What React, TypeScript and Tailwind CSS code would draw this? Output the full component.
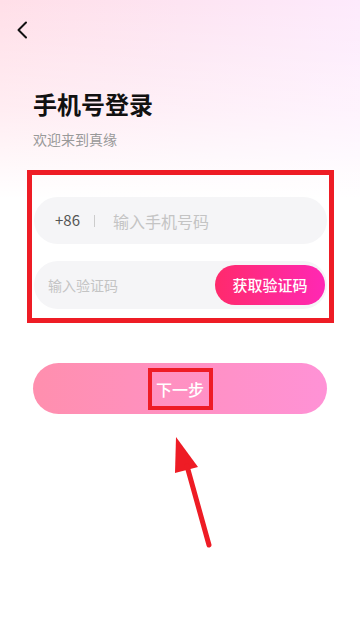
import React from "react";

export default function App() {
  return (
    <div
      className="relative w-[360px] h-[620px] overflow-hidden bg-[linear-gradient(to_bottom,rgba(255,255,255,0)_0%,rgba(255,255,255,0.45)_18%,#ffffff_32%),linear-gradient(to_right,#ffdfe8_0%,#fde4f2_50%,#fdeafc_100%)]"
      style={{ fontFamily: '"Noto Sans CJK SC", "Noto Sans", sans-serif' }}
    >
      <div className="pt-[21px] pl-[16px]">
        <svg width="12" height="18" viewBox="0 0 12 18" fill="none">
          <path d="M10 1.5 L2.5 9 L10 16.5" stroke="#111" strokeWidth="2" strokeLinecap="round" strokeLinejoin="round" />
        </svg>
      </div>

      <div className="ml-[33px] mt-[49px] text-[24px] leading-[32px] font-bold text-[#111]">手机号登录</div>
      <div className="ml-[33px] mt-[9px] text-[14px] leading-[20px] text-[#999]">欢迎来到真缘</div>

      <div className="ml-[27px] mt-[21px] w-[307px] border-[5px] border-[#ee1c25] pt-[22px] pb-[9px] px-[2px] flex flex-col gap-[17px]">
        <div className="h-[47px] rounded-full bg-[#f5f5f7] flex items-center pl-[21px]">
          <span className="text-[15px] text-[#555]">+86</span>
          <span className="ml-[14px] w-px h-[12px] bg-[#ccc]"></span>
          <span className="ml-[18px] text-[16px] text-[#c4c4c4]">输入手机号码</span>
        </div>
        <div className="h-[48px] rounded-full bg-[#f5f5f7] flex items-center pl-[14px] pr-[2px] justify-between">
          <span className="text-[14px] text-[#c4c4c4]">输入验证码</span>
          <div className="h-[40px] w-[110px] rounded-full bg-[linear-gradient(to_right,#ff2a6c,#ff28b4)] flex items-center justify-center text-white text-[15px] font-medium">
            获取验证码
          </div>
        </div>
      </div>

      <div className="ml-[33px] mt-[40px] w-[294px] h-[51px] rounded-full bg-[linear-gradient(to_right,#ff8fae,#ff92d6)] flex items-center justify-center">
        <div className="w-[65px] h-[42px] border-[4px] border-[#ee1c25] flex items-center justify-center text-white text-[16px] font-medium">
          下一步
        </div>
      </div>

      <svg className="absolute left-0 top-0" width="360" height="620" viewBox="0 0 360 620">
        <polygon points="176,437 198,467 175,473" fill="#ee1c25" />
        <line x1="187" y1="466" x2="209" y2="545" stroke="#ee1c25" strokeWidth="5" strokeLinecap="round" />
      </svg>
    </div>
  );
}
